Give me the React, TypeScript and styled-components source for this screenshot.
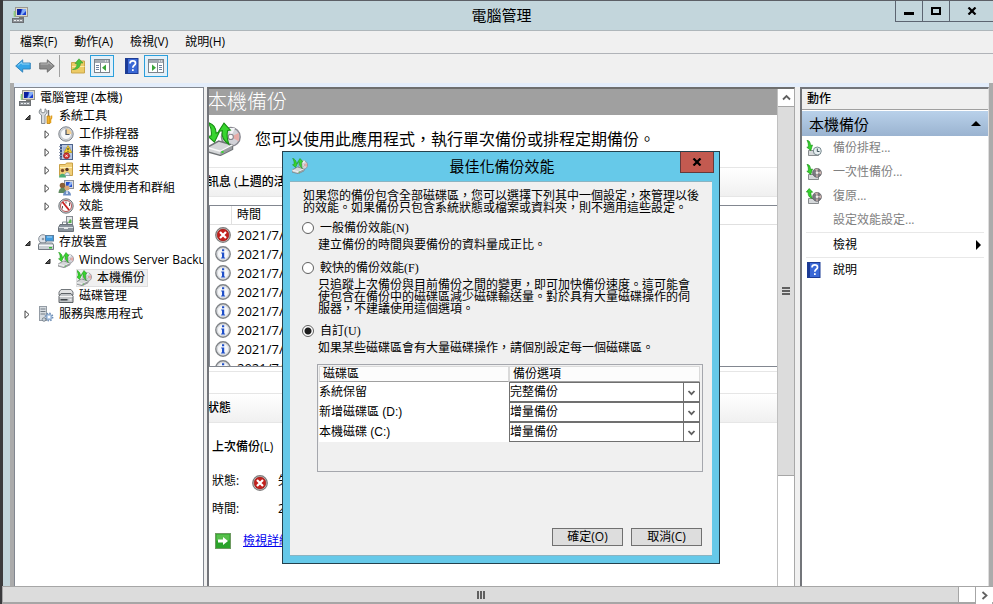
import React from "react";
import styled, { createGlobalStyle, css } from "styled-components";

const GlobalStyle = createGlobalStyle`
  *, *::before, *::after { box-sizing: border-box; }
  html, body { margin: 0; padding: 0; overflow: hidden; }
  body, button, select, input, table {
    font-family: "Open Sans", "Noto Sans CJK TC", sans-serif;
    font-size: 12px;
    line-height: 18px;
    color: #000;
  }
`;

/* ---------- icons ---------- */

const Svg = styled.svg`
  display: block;
  flex: none;
`;

type IconProps = { size?: number };

const Icon = ({ size = 16, children }: IconProps & { children: React.ReactNode }) => (
  <Svg width={size} height={size} viewBox="0 0 16 16" aria-hidden="true">
    {children}
  </Svg>
);

const ComputerIcon = () => (
  <Icon>
    <rect x="3.500" y="0.500" width="12" height="9" fill="#dcd9cc" stroke="#9a9890" />
    <rect x="5" y="2" width="9" height="6" fill="#1c3fd0" />
    <path d="M5 2h4v3l-2 3H5z" fill="#0b1f9c" />
    <path d="M10.500 2H14v2l-4 4H8.500z" fill="#86aef5" />
    <path d="M2.500 4v6M1.500 7h2" stroke="#8fcf7f" strokeWidth="1.500" />
    <rect x="7" y="10" width="5" height="1" fill="#77766f" />
    <rect x="0.500" y="11.500" width="11" height="4" fill="#8f9499" stroke="#6c7074" />
    <path d="M2 13.500h2M5 13.500h2M8 13.500h2" stroke="#e9ecee" />
  </Icon>
);

const ToolsIcon = () => (
  <Icon>
    <path d="M3 0.800v3l2 1.200 2-1.200v-3c1.600.800 2 2.200 2 3.200 0 1.400-.8 2.300-2 3v8.500H3.500V7C2 6.300 1.200 5.400 1.200 4S1.800 1.500 3 .800z" fill="#d9dcdf" stroke="#7c8288" strokeWidth="0.9" />
    <path d="M10.500 2v6" stroke="#777" strokeWidth="1.400" />
    <path d="M9 8h3v7.500H9z" fill="#f2b52a" stroke="#b97c12" strokeWidth="0.8" />
    <path d="M13.500 7.500v2.500l-1 1.500v3.500" fill="none" stroke="#e2a01d" strokeWidth="1.500" />
  </Icon>
);

const ClockIcon = () => (
  <Icon>
    <circle cx="8" cy="8" r="7.200" fill="#d5d9de" stroke="#7b8087" />
    <circle cx="8" cy="8" r="5.500" fill="#f7f8fa" stroke="#a9aeb5" strokeWidth="0.7" />
    <path d="M8 8V2.500A5.500 5.500 0 0 1 13.500 8z" fill="#f3cf91" />
    <path d="M8 3.500V8.500h3.500" fill="none" stroke="#4d5560" strokeWidth="1.200" />
  </Icon>
);

const EventIcon = () => (
  <Icon>
    <rect x="2.500" y="0.500" width="12" height="15" fill="#b9c9e4" stroke="#4e648c" />
    <rect x="2" y="1" width="2" height="14" fill="#3e5687" />
    <path d="M1 2.500h3M1 5.500h3M1 8.500h3M1 11.500h3M1 14h3" stroke="#8d9ab2" />
    <path d="M5 4h8M5 6h8M5 12h8" stroke="#7d93ba" strokeWidth="0.8" />
    <path d="M10 1.500l4 7H6z" fill="#f7d12f" stroke="#a98509" strokeWidth="0.6" />
    <path d="M10 4v2.200M10 7v.800" stroke="#222" />
    <circle cx="8.500" cy="11.800" r="3" fill="#cf2e2e" stroke="#8c1717" strokeWidth="0.6" />
    <path d="M7.300 10.600l2.400 2.400m0-2.400l-2.400 2.400" stroke="#fff" strokeWidth="0.9" />
  </Icon>
);

const SharedFolderIcon = () => (
  <Icon>
    <path d="M1.500 2.500h6l1-1.500h6v12.500h-13z" fill="#f1cf78" stroke="#c9a045" />
    <path d="M2 5.500h12" stroke="#fff0b9" />
    <circle cx="4.500" cy="8.500" r="1.700" fill="#7a4a2c" />
    <path d="M1 15.500c0-5 7-5 7 0z" fill="#4fae72" />
    <circle cx="9" cy="7.500" r="1.700" fill="#5b3a27" />
    <path d="M6.800 13.500c0-4 5-4 5 0z" fill="#e9eff4" stroke="#5a86b5" strokeWidth="0.5" />
  </Icon>
);

const UsersIcon = () => (
  <Icon>
    <rect x="6.500" y="0.500" width="9" height="8" fill="#d8dbe0" stroke="#8b9099" />
    <rect x="8" y="2" width="6" height="5" fill="#2450cb" />
    <path d="M12 2h2v2l-3 3H9.500z" fill="#8fb4f5" />
    <circle cx="4.500" cy="5.500" r="2.800" fill="#8b5f37" />
    <path d="M.500 13c0-7 8-7 8 0z" fill="#5f8a5f" />
    <circle cx="9" cy="8" r="2.500" fill="#dba878" />
    <path d="M5 15.500c0-6.500 8-6.500 8 0z" fill="#6c8fc4" />
    <path d="M8.500 11h1l.500 3H8z" fill="#dfe9f8" />
  </Icon>
);

const PerformanceIcon = () => (
  <Icon>
    <circle cx="8" cy="8" r="7.200" fill="#c9cdd1" stroke="#6f7478" />
    <circle cx="8" cy="8" r="5.500" fill="#fff" stroke="#b03030" strokeWidth="0.8" />
    <path d="M4.500 4l6.500 8" stroke="#cc1f1f" strokeWidth="1.800" />
    <path d="M8 3.500v2M11.500 5v3M4.500 8v2.500" stroke="#444" strokeWidth="0.9" />
  </Icon>
);

const DeviceIcon = () => (
  <Icon>
    <rect x="8.500" y="0.500" width="6" height="8" fill="#e4e6e8" stroke="#858b91" />
    <path d="M10 7l2-4 1.500 1v3z" fill="#57b04c" />
    <path d="M4.500 8.500V6h5v2.500" fill="none" stroke="#7d868e" />
    <path d="M2 8.500h12.500l1 3v4H.500v-4z" fill="#8b949d" stroke="#6a727a" />
    <path d="M1 11.500h14" stroke="#dce1e5" />
    <rect x="6" y="11" width="4" height="2" fill="#e7eaec" />
  </Icon>
);

const StorageIcon = () => (
  <Icon>
    <circle cx="5" cy="5" r="4.300" fill="#dde2e8" stroke="#8a919a" />
    <circle cx="5" cy="5" r="1.300" fill="#8f98a3" />
    <rect x="7.500" y="1.500" width="8" height="5.500" fill="#3f9be0" stroke="#5d7f9e" />
    <path d="M9 3h5" stroke="#b5dcf7" />
    <path d="M1.500 9h13l1 2v4.500H.500V11z" fill="#c9ced3" stroke="#737b83" />
    <path d="M1 11.500h14" stroke="#f4f6f7" />
    <rect x="11" y="13" width="3" height="1.500" fill="#35b636" />
  </Icon>
);

const BackupIcon = ({ size }: IconProps) => (
  <Icon size={size}>
    <circle cx="11.200" cy="7" r="4.400" fill="#d2d2d8" stroke="#8a8a92" strokeWidth="0.700" />
    <path d="M11.200 7L15 5v4z" fill="#e6aaa6" />
    <path d="M11.200 7l-1-4.200h3z" fill="#f4f4f7" />
    <circle cx="11.200" cy="7" r="1.200" fill="#fafafa" stroke="#85858c" strokeWidth="0.500" />
    <path d="M0 12l5.500-3 6.500 1.800v2L6.300 15.700 0 14z" fill="#d4d6d8" stroke="#707477" strokeWidth="0.700" />
    <path d="M0 12l6.300 1.800L12 10.800" fill="none" stroke="#fafafa" strokeWidth="0.700" />
    <path d="M6.300 14v1.500l5.500-2.700v-1.600z" fill="#9a9da0" />
    <rect x="6.800" y="13.600" width="1" height="1" fill="#39d432" />
    <path d="M.600.300C3 1 4.300 3 4.300 5.300L5.800 4.700 3.500 9.500.500 6.800l1.500-.300C2.300 4.300 1.900 2.300.600.300z" fill="#38d52f" stroke="#168d12" strokeWidth="0.500" />
    <path d="M8 .500l3 3.300-1.300.200c-.500 2.300-.200 4.300.600 6.500C8 9 6.800 6.500 7.200 4.100L5.500 4.400z" fill="#38d52f" stroke="#168d12" strokeWidth="0.500" />
  </Icon>
);

const DiskIcon = () => (
  <Icon>
    <path d="M3 1.500h10l2 2.500v3H1V4z" fill="#e2e3e4" stroke="#72777b" />
    <path d="M3 5.500h10l2 2.500v6.500H1V8z" fill="#c2c5c8" stroke="#5e6367" />
    <path d="M1.500 8.500h13" stroke="#f5f5f5" />
    <rect x="2.500" y="11" width="7" height="1.500" fill="#3d4246" />
    <rect x="11.500" y="11" width="2" height="1.500" fill="#eee" />
  </Icon>
);

const ServicesIcon = () => (
  <Icon>
    <rect x="1.500" y="0.500" width="7" height="14" fill="#d6dbe0" stroke="#949ca5" />
    <path d="M2.500 3h5M2.500 5.500h5M2.500 8h5" stroke="#737c86" />
    <circle cx="11" cy="11" r="3.600" fill="none" stroke="#6d8db5" strokeWidth="1.600" strokeDasharray="1.500 1.300" />
    <circle cx="11" cy="11" r="2.900" fill="#b4cce8" stroke="#6d8db5" strokeWidth="0.600" />
    <circle cx="11" cy="11" r="1.200" fill="#fff" />
    <circle cx="6" cy="13.500" r="1.800" fill="#c8d1da" stroke="#6d7781" strokeWidth="0.800" />
  </Icon>
);

const ErrorIcon = () => (
  <Icon>
    <circle cx="8" cy="8" r="7.300" fill="#d6d6d6" stroke="#7b7b7b" strokeWidth="1.200" />
    <circle cx="8" cy="8" r="5.900" fill="#c3201c" stroke="#8e1512" strokeWidth="0.600" />
    <path d="M5 5l6 6m0-6l-6 6" stroke="#fff" strokeWidth="2.200" />
  </Icon>
);

const InfoIcon = () => (
  <Icon>
    <circle cx="8" cy="8" r="7.200" fill="#e4e6e9" stroke="#808488" strokeWidth="1.400" />
    <circle cx="8" cy="8" r="5.600" fill="#f6f7f9" stroke="#c7cbd0" strokeWidth="0.600" />
    <path d="M7 3.200h2.200v2H7zM6.200 6.500h3v5h.900v1H6.100v-1H7v-4h-.800z" fill="#1f4fc8" />
  </Icon>
);

const GoIcon = () => (
  <Icon>
    <rect x="0.500" y="0.500" width="15" height="15" fill="#2ba32b" stroke="#6f9a62" />
    <rect x="1.500" y="1.500" width="13" height="6" fill="#57bf4b" />
    <path d="M3 6.500h5V4l5 4-5 4V9.500H3z" fill="#fff" />
  </Icon>
);

const HelpIcon = () => (
  <Icon>
    <rect x="1.500" y="0.500" width="12.500" height="15" fill="#3a68d6" stroke="#1d3c94" />
    <path d="M2 1h2v14H2z" fill="#1b3a96" />
    <path d="M6 5.500c0-3.500 5.500-3.200 5.500-.300 0 2.200-2.700 2-2.700 4.600" fill="none" stroke="#fff" strokeWidth="1.700" />
    <rect x="8" y="11.200" width="1.700" height="1.800" fill="#fff" />
  </Icon>
);

const ActionIcon = ({ up, clock }: { up?: boolean; clock?: boolean }) => (
  <Icon>
    <path d="M2.500 10.500h6l4 2v3h-10z" fill="#d5d8da" stroke="#6f7376" strokeWidth="0.800" />
    <path
      d={up ? "M3.200.500l3.500 3.700H5c-.300 2 .200 4 1.500 6.500L3.500 9C2.300 7.500 2 5.800 2.200 4.200L.300 4z" : "M1 .300L3 1c1.200 1.500 1.500 3 1.500 4.300L6.500 5l-1.700 5.500L.800 7.300l1.500-.300C2.500 4.500 2.200 2.500 1 .300z"}
      fill="#35d32c"
      stroke="#128a10"
      strokeWidth="0.600"
    />
    {clock ? (
      <>
        <circle cx="11.300" cy="11" r="4" fill="#e6eef0" stroke="#7a8b91" />
        <path d="M11.300 8.500v3h2.200" fill="none" stroke="#3d5058" />
      </>
    ) : (
      <>
        <circle cx="11" cy="8.800" r="4.400" fill="#7a7a80" stroke="#606065" strokeWidth="0.800" />
        <path d="M11 8.800L9 5l3-.500zM11 8.800l4-1.500.200 3zM11 8.800l-1 4h2z" fill="#cdb4ae" />
        <circle cx="11" cy="8.800" r="1.300" fill="#eee" />
      </>
    )}
  </Icon>
);

const ArrowIcon = ({ back }: { back?: boolean }) => (
  <Icon>
    <path
      d={back ? "M.700 8l7-6.200V5h7.600v6H7.700v3.200z" : "M15.300 8l-7-6.200V5H.700v6h7.600v3.200z"}
      fill={back ? "#35a5e8" : "#8b8b8b"}
      stroke={back ? "#2b7fb8" : "#6a6a6a"}
      strokeWidth="0.900"
    />
    <path d={back ? "M2.800 7.500l4-3.300V6h7.700" : "M13.200 7.500l-4-3.300V6H1.500"} fill="none" stroke={back ? "#9edbf9" : "#bdbdbd"} strokeWidth="0.900" />
  </Icon>
);

const UpFolderIcon = () => (
  <Icon>
    <path d="M1.500 4.500h5l1-1.500h7v12h-13z" fill="#edcb66" stroke="#c9a54b" />
    <path d="M2 8.500h12.500" stroke="#faeaa9" />
    <path d="M2.500 11.500c3-.500 4.500-3 4.500-6H5L9 .800 13 5h-2.500c0 4-3 7-8 6.500z" fill="#4cc23c" stroke="#3d9a32" strokeWidth="0.600" />
  </Icon>
);

const PaneIcon = ({ right }: { right?: boolean }) => (
  <Icon>
    <rect x="0.500" y="1.500" width="15" height="13" fill="#fff" stroke="#7c838b" />
    <path d="M1 3.500h14" stroke="#a4abb3" strokeWidth="3" />
    <path d="M11 3h1M13 3h1" stroke="#fff" />
    <path d={right ? "M9.500 5v9" : "M6.500 5v9"} stroke="#7c838b" />
    <path d={right ? "M11 7.500h3M11 9.500h3M11 11.500h3" : "M2 7.500h3M2 9.500h3M2 11.500h3"} stroke="#6d82a2" />
    <path d={right ? "M4 6.500l4 3.200L4 13z" : "M12 6.500L8 9.700l4 3.300z"} fill="#3ba53a" />
  </Icon>
);

const Chevron = ({ dir }: { dir: "up" | "down" | "right" }) => (
  <Svg width="9" height="9" viewBox="0 0 9 9" aria-hidden="true">
    <path
      d={dir === "up" ? "M1 6.500l3.500-3.500L8 6.500" : dir === "down" ? "M1.500 3l3 3.200L7.500 3" : "M2.500 1l4 3.500-4 3.500"}
      fill="none"
      stroke="#606060"
      strokeWidth="1.800"
    />
  </Svg>
);

const CrossIcon = () => (
  <Svg width="10" height="8" viewBox="0 0 10 8" aria-hidden="true">
    <path d="M1.500.500l7 7M8.500.500l-7 7" stroke="#000" strokeWidth="2.200" />
  </Svg>
);

/* ---------- window frame ---------- */

const Desktop = styled.div`
  display: flex;
  flex-direction: column;
  height: 100vh;
  background: #3b3b3d;
`;

const Window = styled.div`
  flex: 1;
  min-height: 0;
  display: flex;
  flex-direction: column;
  margin-left: 3px;
  padding-left: 7px;
  border-top: 1px solid #5c5f66;
  background: #c3d6dc;
`;

const TitleBar = styled.header`
  flex: none;
  display: flex;
  align-items: flex-start;
  height: 29px;
`;

const TitleIcon = styled.span`
  flex: none;
  width: 98px;
  padding: 6px 2px;
`;

const Title = styled.h1`
  flex: 1;
  margin: 0;
  font-size: 15px;
  font-weight: 400;
  line-height: 28px;
  text-align: center;
`;

const WindowControls = styled.div`
  flex: none;
  display: flex;
  width: 98px;
  height: 21px;
  border: solid #5c6470;
  border-width: 0 0 1px 1px;
`;

const ControlButton = styled.button<{ $wide?: boolean }>`
  flex: ${(p) => (p.$wide ? "1 0 0" : "0 0 27px")};
  display: flex;
  align-items: center;
  justify-content: center;
  padding: 0;
  border: 0;
  border-right: ${(p) => (p.$wide ? "0" : "1px solid #5c6470")};
  background: transparent;
`;

const MenuBar = styled.nav`
  flex: none;
  display: flex;
  align-items: center;
  gap: 17px;
  height: 24px;
  padding-left: 10px;
  border-top: 1px solid #aeb6ba;
  border-bottom: 1px solid #b0b3b8;
  background: #f0f0f0;
`;

const MenuItem = styled.button`
  padding: 0;
  border: 0;
  background: transparent;
`;

const ToolBar = styled.div`
  flex: none;
  display: flex;
  align-items: center;
  height: 29px;
  padding: 0 5px 5px;
  background: #f0f0f0;
`;

const ToolButton = styled.button<{ $on?: boolean }>`
  display: flex;
  align-items: center;
  justify-content: center;
  width: 24px;
  height: 22px;
  padding: 0;
  border: 1px solid ${(p) => (p.$on ? "#2a9fdc" : "transparent")};
  background: ${(p) => (p.$on ? "#e3f0f9" : "transparent")};
`;

const ToolGroup = styled.div<{ $first?: boolean }>`
  display: flex;
  margin-left: ${(p) => (p.$first ? "-4px" : "6px")};
`;

const ToolSeparator = styled.span`
  width: 1px;
  height: 22px;
  background: #a0a0a0;
`;

const Panes = styled.div`
  flex: 1;
  min-height: 0;
  display: flex;
  padding-top: 4px;
  border-left: 4px solid #ababab;
  border-right: 4px solid #ababab;
  background: linear-gradient(#e3edfb 4px, #f0f0f0 4px);
`;

/* ---------- tree ---------- */

const TreePane = styled.aside`
  flex: none;
  width: 190px;
  margin-right: 3px;
  overflow: hidden;
  border: 1px solid #828790;
  border-bottom: 0;
  background: #fff;
`;

const TreeList = styled.ul`
  margin: 0;
  padding: 1px 0 0 4px;
  list-style: none;
`;

const TreeRow = styled.li<{ $level: number }>`
  display: flex;
  align-items: center;
  height: 18px;
  padding-left: ${(p) => Math.max(0, p.$level - 1) * 18 + (p.$level > 1 ? 2 : 0)}px;
  white-space: nowrap;
`;

const Expander = styled.span`
  flex: none;
  display: flex;
  align-items: center;
  width: 19px;
  padding-left: 5px;
`;

const TreeLabel = styled.span<{ $selected?: boolean }>`
  display: flex;
  align-items: center;
  gap: 5px;
  height: 18px;
  ${(p) =>
    p.$selected &&
    css`
      padding-right: 3px;
      background: #f0f0f0;
      outline: 1px solid #dedede;
      outline-offset: -1px;
    `}
`;

type Node = { level: number; text: string; icon: React.ReactNode; state?: "open" | "closed"; selected?: boolean };

const nodes: Node[] = [
  { level: 0, text: "電腦管理 (本機)", icon: <ComputerIcon /> },
  { level: 1, text: "系統工具", icon: <ToolsIcon />, state: "open" },
  { level: 2, text: "工作排程器", icon: <ClockIcon />, state: "closed" },
  { level: 2, text: "事件檢視器", icon: <EventIcon />, state: "closed" },
  { level: 2, text: "共用資料夾", icon: <SharedFolderIcon />, state: "closed" },
  { level: 2, text: "本機使用者和群組", icon: <UsersIcon />, state: "closed" },
  { level: 2, text: "效能", icon: <PerformanceIcon />, state: "closed" },
  { level: 2, text: "裝置管理員", icon: <DeviceIcon /> },
  { level: 1, text: "存放裝置", icon: <StorageIcon />, state: "open" },
  { level: 2, text: "Windows Server Backup", icon: <BackupIcon />, state: "open" },
  { level: 3, text: "本機備份", icon: <BackupIcon />, selected: true },
  { level: 2, text: "磁碟管理", icon: <DiskIcon /> },
  { level: 1, text: "服務與應用程式", icon: <ServicesIcon />, state: "closed" },
];

const Tree = () => (
  <TreeList>
    {nodes.map((n) => (
      <TreeRow key={n.level + n.text} $level={n.level}>
        {n.level > 0 && (
          <Expander>
            {n.state && (
              <Svg width="8" height="9" viewBox="0 0 8 9" aria-hidden="true">
                {n.state === "open" ? (
                  <path d="M6 3v4.500H1.500z" fill="#595959" stroke="#262626" />
                ) : (
                  <path d="M1 .800v7.400L5 4.500z" fill="#fff" stroke="#444" />
                )}
              </Svg>
            )}
          </Expander>
        )}
        <TreeLabel $selected={n.selected}>
          {n.icon}
          {n.text}
        </TreeLabel>
      </TreeRow>
    ))}
  </TreeList>
);

/* ---------- main pane ---------- */

const MainPane = styled.main`
  flex: 1;
  min-width: 0;
  display: flex;
  margin-right: 5px;
  overflow: hidden;
  border: 2px solid #73757a;
  border-top-color: #6e6e6e;
  border-right: 1px solid #a8a8a8;
  border-bottom: 0;
  background: #fff;
`;

const MainContent = styled.div`
  flex: 1;
  min-width: 0;
  margin-left: -2px;
  white-space: nowrap;
`;

const Caption = styled.h2`
  margin: 0;
  height: 26px;
  background: #a0a0a0;
  color: #fff;
  font-size: 20px;
  font-weight: 300;
  line-height: 26px;
`;

const Intro = styled.div`
  display: flex;
  align-items: center;
  gap: 14px;
  height: 52px;
  padding-bottom: 4px;
  font-size: 16px;
  line-height: 24px;
`;

const IntroText = styled.p`
  margin: 0;
`;

const SectionTitle = styled.h3`
  margin: 0;
  height: 30px;
  border: solid #e6e6e6;
  border-width: 1px 0;
  background: linear-gradient(#fff, #f0f0f0);
  font-size: 12px;
  font-weight: 500;
  line-height: 28px;
`;

const ListFrame = styled.div`
  height: 162px;
  margin: 8px 0 4px 2px;
  overflow: hidden;
  border: solid #828790;
  border-width: 1px 0 1px 1px;
`;

const MessageTable = styled.table`
  width: 100%;
  border-collapse: separate;
  border-spacing: 0;

  th {
    height: 19px;
    padding: 0 0 0 5px;
    border: solid #e0e0e0;
    border-width: 0 0 1px 1px;
    font-weight: 400;
    text-align: left;
  }
  th:first-child {
    width: 21px;
    border-left: 0;
  }
  td {
    height: 19px;
    padding: 0 0 0 6px;
    font-size: 13px;
  }
  td:first-child {
    padding: 0 0 0 5px;
  }
`;

const Spacer = styled.div`
  height: 22px;
  border-top: 1px solid #e6e6e6;
`;

const StatusBlock = styled.div`
  display: flex;
  flex-direction: column;
  padding: 15px 0 0 5px;
`;

const StatusTitle = styled.div`
  margin-bottom: 11px;
  font-weight: 500;
`;

const StatusRow = styled.div`
  display: grid;
  grid-template-columns: 40px 26px 1fr;
  align-items: center;
  height: 28px;
`;

const StatusMark = styled.span`
  padding-top: 4px;
`;

const LinkRow = styled.div`
  display: flex;
  align-items: center;
  gap: 12px;
  height: 36px;
  padding-left: 3px;
`;

const DetailLink = styled.a`
  color: #0000ee;
  text-decoration: underline;
`;

/* ---------- scroll bars ---------- */

const VScroll = styled.div`
  flex: none;
  display: flex;
  flex-direction: column;
  width: 17px;
  border-left: 1px solid #c0c0c0;
  background: #fff;
`;

const ScrollButton = styled.button`
  flex: none;
  display: flex;
  align-items: center;
  justify-content: center;
  width: 16px;
  height: 17px;
  padding: 0;
  border: 0;
  background: #fff;
`;

const VThumb = styled.div`
  flex: 10 0 0;
  display: flex;
  align-items: center;
  justify-content: center;
  border: solid #a6a6a6;
  border-width: 1px 0;
  background: #dcdcdc;
`;

const VTrack = styled.div`
  flex: 3 0 0;
`;

const HScroll = styled.div`
  flex: none;
  display: flex;
  height: 18px;
  margin-left: 2px;
  padding-right: 1px;
  border: solid #a6a6a6;
  border-width: 1px 0 2px 1px;
  background: #fff;
`;

const HThumb = styled.div`
  flex: 1;
  display: flex;
  align-items: center;
  justify-content: center;
  background: #dcdcdc;
`;

const HTrack = styled.div`
  flex: none;
  width: 18px;
  border: solid #a6a6a6;
  border-width: 0 1px;
`;

const Grip = ({ vertical }: { vertical?: boolean }) => (
  <Svg width="8" height="8" viewBox="0 0 8 8" aria-hidden="true">
    <path d={vertical ? "M0 1h8M0 4h8M0 7h8" : "M1 0v8M4 0v8M7 0v8"} stroke="#606060" strokeWidth="2" />
  </Svg>
);

/* ---------- action pane ---------- */

const ActionPane = styled.aside`
  flex: none;
  width: 189px;
  overflow: hidden;
  border: 2px solid #73757a;
  border-right: 1px solid #dedede;
  border-bottom: 0;
  background: #fff;
`;

const PaneHeader = styled.h2`
  margin: 0 0 1px;
  height: 21px;
  padding-left: 5px;
  border-bottom: 1px solid #a0a0a0;
  background: #f0f0f0;
  font-size: 12px;
  font-weight: 500;
  line-height: 20px;
`;

const ActionGroup = styled.button`
  display: flex;
  align-items: center;
  justify-content: space-between;
  width: 100%;
  height: 25px;
  padding: 0 7px;
  border: 0;
  background: linear-gradient(#b9d1ea, #9ab3d0);
  font-size: 15px;
`;

const ActionList = styled.ul`
  margin: 0;
  padding: 0 4px;
  list-style: none;
`;

const ActionItem = styled.li<{ $ruled?: boolean }>`
  border-bottom: ${(p) => (p.$ruled ? "1px solid #e8e8e8" : "0")};
`;

const ActionButton = styled.button`
  display: grid;
  grid-template-columns: 27px 1fr 8px;
  align-items: center;
  width: 100%;
  height: 24px;
  padding: 0;
  border: 0;
  background: transparent;
  text-align: left;

  &:disabled {
    color: #808080;
  }
`;

const actions = [
  { text: "備份排程...", icon: <ActionIcon clock />, disabled: true },
  { text: "一次性備份...", icon: <ActionIcon />, disabled: true },
  { text: "復原...", icon: <ActionIcon up />, disabled: true },
  { text: "設定效能設定...", icon: <span />, disabled: true, ruled: true },
  { text: "檢視", icon: <span />, submenu: true, ruled: true },
  { text: "說明", icon: <HelpIcon /> },
];

/* ---------- dialog ---------- */

const Dialog = styled.section`
  position: absolute;
  top: 151px;
  left: 282px;
  width: 438px;
  padding: 0 7px 7px;
  border: 1px solid #24414d;
  background: #66c9e9;
`;

const DialogTitleBar = styled.header`
  display: flex;
  align-items: flex-start;
  height: 29px;
  margin-right: -2px;
`;

const DialogIcon = styled.span`
  flex: none;
  width: 34px;
  padding: 6px 2px;
`;

const DialogTitle = styled.h2`
  flex: 1;
  margin: 0;
  font-size: 15px;
  font-weight: 400;
  line-height: 28px;
  text-align: center;
`;

const DialogClose = styled.button`
  flex: none;
  display: flex;
  align-items: center;
  justify-content: center;
  width: 34px;
  height: 21px;
  padding: 0;
  border: 1px solid #643a3c;
  border-top: 0;
  background: #c35a50;
`;

const DialogBody = styled.form`
  display: flex;
  flex-direction: column;
  padding: 8px 10px 9px 12px;
  border-top: 1px solid #8bb4c2;
  border-bottom: 1px solid #8bb4c2;
  background: #f0f0f0;
  font-family: "Liberation Serif", "Noto Sans CJK TC", serif;
  line-height: 12px;
`;

const DialogText = styled.p`
  margin: 0 0 6px;
  padding-left: 1px;
  line-height: 12px;
  white-space: nowrap;
`;

const Option = styled.div<{ $gap: number }>`
  margin-bottom: ${(p) => p.$gap}px;
`;

const OptionLabel = styled.label`
  display: flex;
  align-items: center;
  gap: 6px;
  height: 16px;
  font-size: 12px;
`;

const Radio = styled.input`
  appearance: none;
  flex: none;
  width: 12px;
  height: 12px;
  margin: 0;
  border: 1px solid #606060;
  border-radius: 50%;
  background: #fff;

  &:checked {
    background: radial-gradient(circle, #1c1c1c 3px, #fff 4px);
  }
`;

const OptionText = styled.p`
  margin: 3px 0 0 16px;
  line-height: 12px;
  white-space: nowrap;
`;

const VolumeFrame = styled.div`
  height: 108px;
  margin-right: -1px;
  margin-left: 15px;
  padding: 1px 2px 0 1px;
  border: 1px solid #a5a7ad;
`;

const VolumeTable = styled.table`
  width: 100%;
  table-layout: fixed;
  border-collapse: separate;
  border-spacing: 0;
  font-family: "Liberation Sans", "Noto Sans CJK TC", sans-serif;
  line-height: 14px;

  th {
    height: 16px;
    padding: 0 0 0 3px;
    border: 1px solid #dadada;
    border-bottom-color: #a0a0a0;
    background: #fcfcfc;
    font-weight: 400;
    text-align: left;
  }
  th:first-child {
    width: 190px;
  }
  td {
    height: 20px;
    padding: 0;
    background: #fff;
  }
`;

const SelectBox = styled.div`
  position: relative;
  height: 20px;
`;

const Select = styled.select`
  appearance: none;
  display: block;
  width: 100%;
  height: 20px;
  padding: 0 18px 0 0;
  border: 1px solid #707070;
  border-radius: 0;
  background: #fff;
  line-height: 16px;
`;

const SelectArrow = styled.span`
  position: absolute;
  top: 1px;
  right: 1px;
  bottom: 1px;
  display: flex;
  align-items: center;
  justify-content: center;
  width: 16px;
  border-left: 1px solid #707070;
  pointer-events: none;
`;

const DialogButtons = styled.div`
  display: flex;
  justify-content: flex-end;
  gap: 8px;
  margin-top: 56px;
`;

const DialogButton = styled.button`
  width: 71px;
  height: 18px;
  padding: 0;
  border: 1px solid #707070;
  background: #dddddd;
  line-height: 16px;
`;

const volumes = [
  { name: "系統保留", mode: "完整備份" },
  { name: "新增磁碟區 (D:)", mode: "增量備份" },
  { name: "本機磁碟 (C:)", mode: "增量備份" },
];

const OptimizeDialog = () => (
  <Dialog role="dialog" aria-labelledby="dialog-title">
    <DialogTitleBar>
      <DialogIcon><BackupIcon /></DialogIcon>
      <DialogTitle id="dialog-title">最佳化備份效能</DialogTitle>
      <DialogClose type="button" aria-label="關閉"><CrossIcon /></DialogClose>
    </DialogTitleBar>
    <DialogBody onSubmit={(e) => e.preventDefault()}>
      <DialogText>
        如果您的備份包含全部磁碟區，您可以選擇下列其中一個設定，來管理以後<br />
        的效能。如果備份只包含系統狀態或檔案或資料夾，則不適用這些設定。
      </DialogText>
      <Option $gap={9}>
        <OptionLabel><Radio type="radio" name="mode" />一般備份效能(N)</OptionLabel>
        <OptionText>建立備份的時間與要備份的資料量成正比。</OptionText>
      </Option>
      <Option $gap={8}>
        <OptionLabel><Radio type="radio" name="mode" />較快的備份效能(F)</OptionLabel>
        <OptionText>
          只追蹤上次備份與目前備份之間的變更，即可加快備份速度。這可能會<br />
          使包含在備份中的磁碟區減少磁碟輸送量。對於具有大量磁碟操作的伺<br />
          服器，不建議使用這個選項。
        </OptionText>
      </Option>
      <Option $gap={10}>
        <OptionLabel><Radio type="radio" name="mode" defaultChecked />自訂(U)</OptionLabel>
        <OptionText>如果某些磁碟區會有大量磁碟操作，請個別設定每一個磁碟區。</OptionText>
      </Option>
      <VolumeFrame>
        <VolumeTable>
          <thead>
            <tr><th>磁碟區</th><th>備份選項</th></tr>
          </thead>
          <tbody>
            {volumes.map((v) => (
              <tr key={v.name}>
                <td>{v.name}</td>
                <td>
                  <SelectBox>
                    <Select aria-label={v.name} defaultValue={v.mode}>
                      <option>完整備份</option>
                      <option>增量備份</option>
                    </Select>
                    <SelectArrow><Chevron dir="down" /></SelectArrow>
                  </SelectBox>
                </td>
              </tr>
            ))}
          </tbody>
        </VolumeTable>
      </VolumeFrame>
      <DialogButtons>
        <DialogButton type="submit">確定(O)</DialogButton>
        <DialogButton type="button">取消(C)</DialogButton>
      </DialogButtons>
    </DialogBody>
  </Dialog>
);

/* ---------- page ---------- */

export default function App() {
  return (
    <Desktop>
      <GlobalStyle />
      <Window>
        <TitleBar>
          <TitleIcon><ComputerIcon /></TitleIcon>
          <Title>電腦管理</Title>
          <WindowControls>
            <ControlButton aria-label="最小化">
              <Svg width="10" height="8" viewBox="0 0 10 8"><rect y="5" width="10" height="3" /></Svg>
            </ControlButton>
            <ControlButton aria-label="最大化">
              <Svg width="10" height="8" viewBox="0 0 10 8"><path d="M0 0h10v8H0zM2 2v4h6V2z" fillRule="evenodd" /></Svg>
            </ControlButton>
            <ControlButton $wide aria-label="關閉"><CrossIcon /></ControlButton>
          </WindowControls>
        </TitleBar>
        <MenuBar>
          {["檔案(F)", "動作(A)", "檢視(V)", "說明(H)"].map((m) => (
            <MenuItem key={m}>{m}</MenuItem>
          ))}
        </MenuBar>
        <ToolBar>
          <ToolGroup $first>
            <ToolButton aria-label="上一頁"><ArrowIcon back /></ToolButton>
            <ToolButton aria-label="下一頁"><ArrowIcon /></ToolButton>
          </ToolGroup>
          <ToolSeparator />
          <ToolGroup>
            <ToolButton aria-label="上一層"><UpFolderIcon /></ToolButton>
            <ToolButton $on aria-label="主控台樹狀目錄"><PaneIcon /></ToolButton>
          </ToolGroup>
          <ToolGroup>
            <ToolButton aria-label="說明"><HelpIcon /></ToolButton>
            <ToolButton $on aria-label="動作窗格"><PaneIcon right /></ToolButton>
          </ToolGroup>
        </ToolBar>
        <Panes>
          <TreePane><Tree /></TreePane>
          <MainPane>
            <MainContent>
              <Caption>本機備份</Caption>
              <Intro>
                <BackupIcon size={34} />
                <IntroText>您可以使用此應用程式，執行單次備份或排程定期備份。</IntroText>
              </Intro>
              <SectionTitle>訊息 (上週的活動)</SectionTitle>
              <ListFrame>
                <MessageTable>
                  <thead>
                    <tr><th aria-label="狀態" /><th>時間</th></tr>
                  </thead>
                  <tbody>
                    {[true, false, false, false, false, false, false, false].map((failed, i) => (
                      <tr key={i}>
                        <td>{failed ? <ErrorIcon /> : <InfoIcon />}</td>
                        <td>2021/7/</td>
                      </tr>
                    ))}
                  </tbody>
                </MessageTable>
              </ListFrame>
              <Spacer />
              <SectionTitle>狀態</SectionTitle>
              <StatusBlock>
                <StatusTitle>上次備份(L)</StatusTitle>
                <StatusRow><span>狀態:</span><StatusMark><ErrorIcon /></StatusMark><span>失敗</span></StatusRow>
                <StatusRow><span>時間:</span><span /><span>2021/7/</span></StatusRow>
                <LinkRow><GoIcon /><DetailLink href="#details">檢視詳細資料</DetailLink></LinkRow>
              </StatusBlock>
            </MainContent>
            <VScroll>
              <ScrollButton aria-label="向上捲動"><Chevron dir="up" /></ScrollButton>
              <VThumb><Grip vertical /></VThumb>
              <VTrack />
            </VScroll>
          </MainPane>
          <ActionPane>
            <PaneHeader>動作</PaneHeader>
            <ActionGroup>
              本機備份
              <Svg width="10" height="5" viewBox="0 0 10 5"><path d="M0 5l5-5 5 5z" /></Svg>
            </ActionGroup>
            <ActionList>
              {actions.map((a) => (
                <ActionItem key={a.text} $ruled={a.ruled}>
                  <ActionButton disabled={a.disabled}>
                    {a.icon}
                    <span>{a.text}</span>
                    {a.submenu && <Svg width="5" height="10" viewBox="0 0 5 10"><path d="M0 0l5 5-5 5z" /></Svg>}
                  </ActionButton>
                </ActionItem>
              ))}
            </ActionList>
          </ActionPane>
        </Panes>
      </Window>
      <HScroll>
        <HThumb><Grip /></HThumb>
        <HTrack />
        <ScrollButton aria-label="向右捲動"><Chevron dir="right" /></ScrollButton>
      </HScroll>
      <OptimizeDialog />
    </Desktop>
  );
}
